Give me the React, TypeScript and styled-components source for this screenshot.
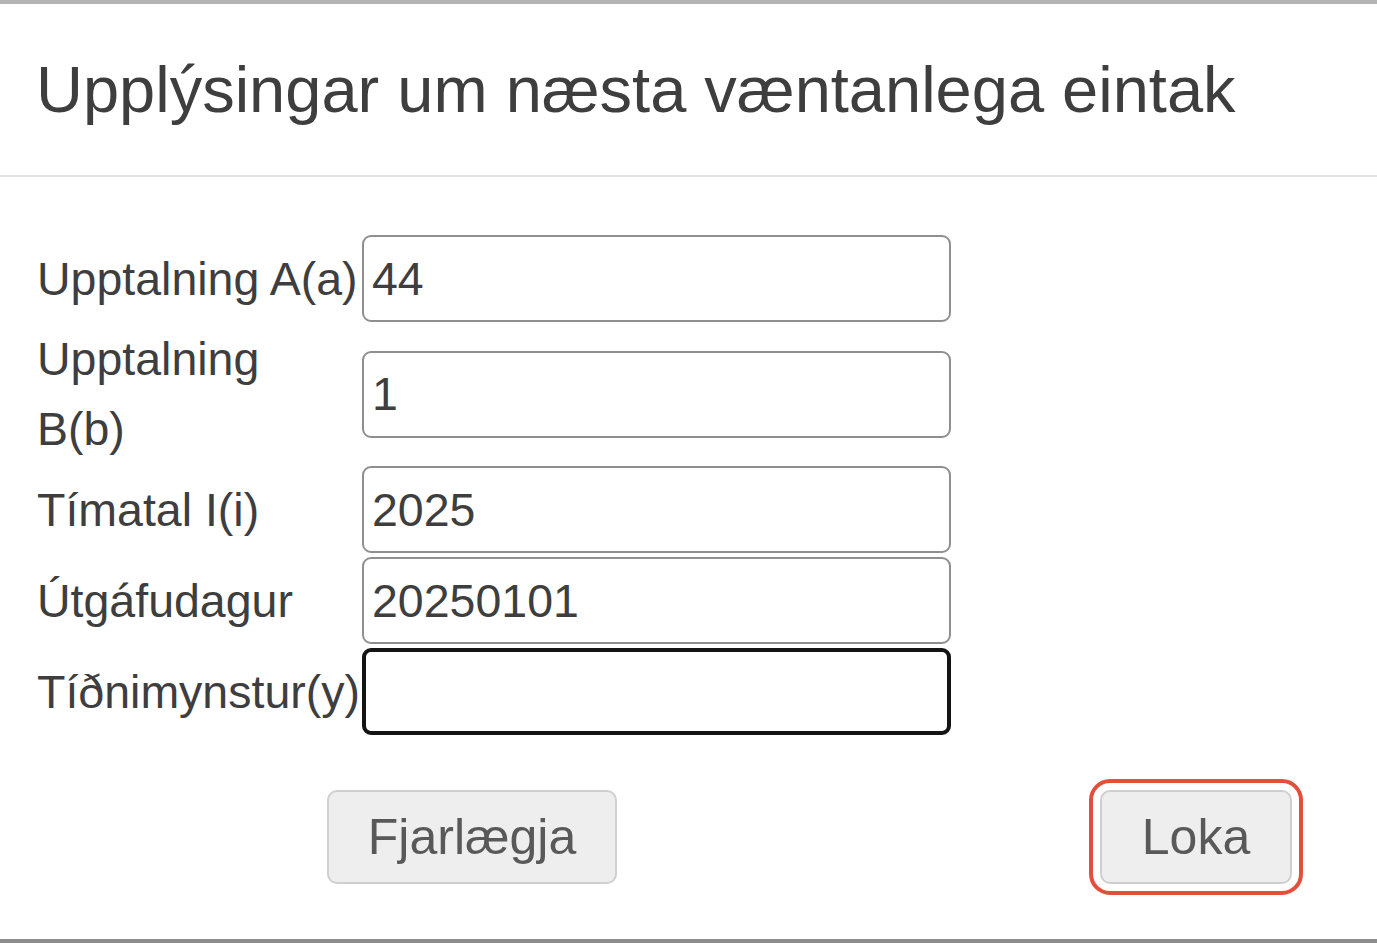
import React from "react";
import styled, { createGlobalStyle } from "styled-components";

const Global = createGlobalStyle`
  html, body { margin: 0; padding: 0; background: #fff; }
  body { font-family: "Liberation Sans", Arial, sans-serif; }
  * { box-sizing: border-box; }
`;

const Frame = styled.div`
  width: 1377px;
  height: 943px;
  border-top: 4px solid #b4b4b4;
  border-bottom: 4px solid #8c8c8c;
  background: #fff;
  display: flex;
  flex-direction: column;
  overflow: hidden;
`;

const Header = styled.div`
  padding: 50px 36px 49px 36px;
  border-bottom: 2px solid #e3e3e3;
`;

const Title = styled.h4`
  margin: 0;
  font-size: 65px;
  line-height: 72px;
  font-weight: 400;
  color: #3e3e3e;
  white-space: nowrap;
`;

const Body = styled.div`
  padding: 56px 0 0 37px;
`;

const Form = styled.div`
  display: grid;
  grid-template-columns: 325px 589px;
  align-items: center;
`;

const Label = styled.label`
  font-size: 46.5px;
  line-height: 70px;
  color: #3e3e3e;
  white-space: nowrap;
`;

const Cell = styled.div`
  padding: 2px 0;
`;

const Input = styled.input<{ $focused?: boolean }>`
  display: block;
  width: 589px;
  height: 87px;
  margin: 0;
  padding: 0 ${(p) => (p.$focused ? 7 : 8)}px;
  font-family: "Liberation Sans", Arial, sans-serif;
  font-size: 46.5px;
  color: #3e3e3e;
  background: #fff;
  border: ${(p) => (p.$focused ? "4px solid #141414" : "2px solid #8f8f8f")};
  border-radius: 9px;
  outline: none;
`;

const Footer = styled.div`
  margin-top: 53px;
  display: flex;
  justify-content: space-between;
  align-items: center;
  padding: 0 85px 0 290px;
`;

const Button = styled.button<{ $w: number; $ring?: boolean }>`
  width: ${(p) => p.$w}px;
  height: 94px;
  margin: 0;
  padding: 0;
  font-family: "Liberation Sans", Arial, sans-serif;
  font-size: 50px;
  color: #595959;
  background: #eeeeee;
  border: 2px solid #cfcfcf;
  border-radius: 10px;
  cursor: pointer;
  ${(p) =>
    p.$ring
      ? `outline: 4px solid #e2503c; outline-offset: 7px;`
      : `outline: none;`}
`;

export default function App() {
  return (
    <>
      <Global />
      <Frame>
        <Header>
          <Title>Upplýsingar um næsta væntanlega eintak</Title>
        </Header>
        <Body>
          <Form>
            <Label>Upptalning A(a)</Label>
            <Cell>
              <Input defaultValue="44" />
            </Cell>
            <Label>
              Upptalning
              <br />
              B(b)
            </Label>
            <Cell>
              <Input defaultValue="1" />
            </Cell>
            <Label>Tímatal I(i)</Label>
            <Cell>
              <Input defaultValue="2025" />
            </Cell>
            <Label>Útgáfudagur</Label>
            <Cell>
              <Input defaultValue="20250101" />
            </Cell>
            <Label>Tíðnimynstur(y)</Label>
            <Cell>
              <Input defaultValue="" $focused />
            </Cell>
          </Form>
          <Footer>
            <Button $w={290}>Fjarlægja</Button>
            <Button $w={192} $ring>
              Loka
            </Button>
          </Footer>
        </Body>
      </Frame>
    </>
  );
}
